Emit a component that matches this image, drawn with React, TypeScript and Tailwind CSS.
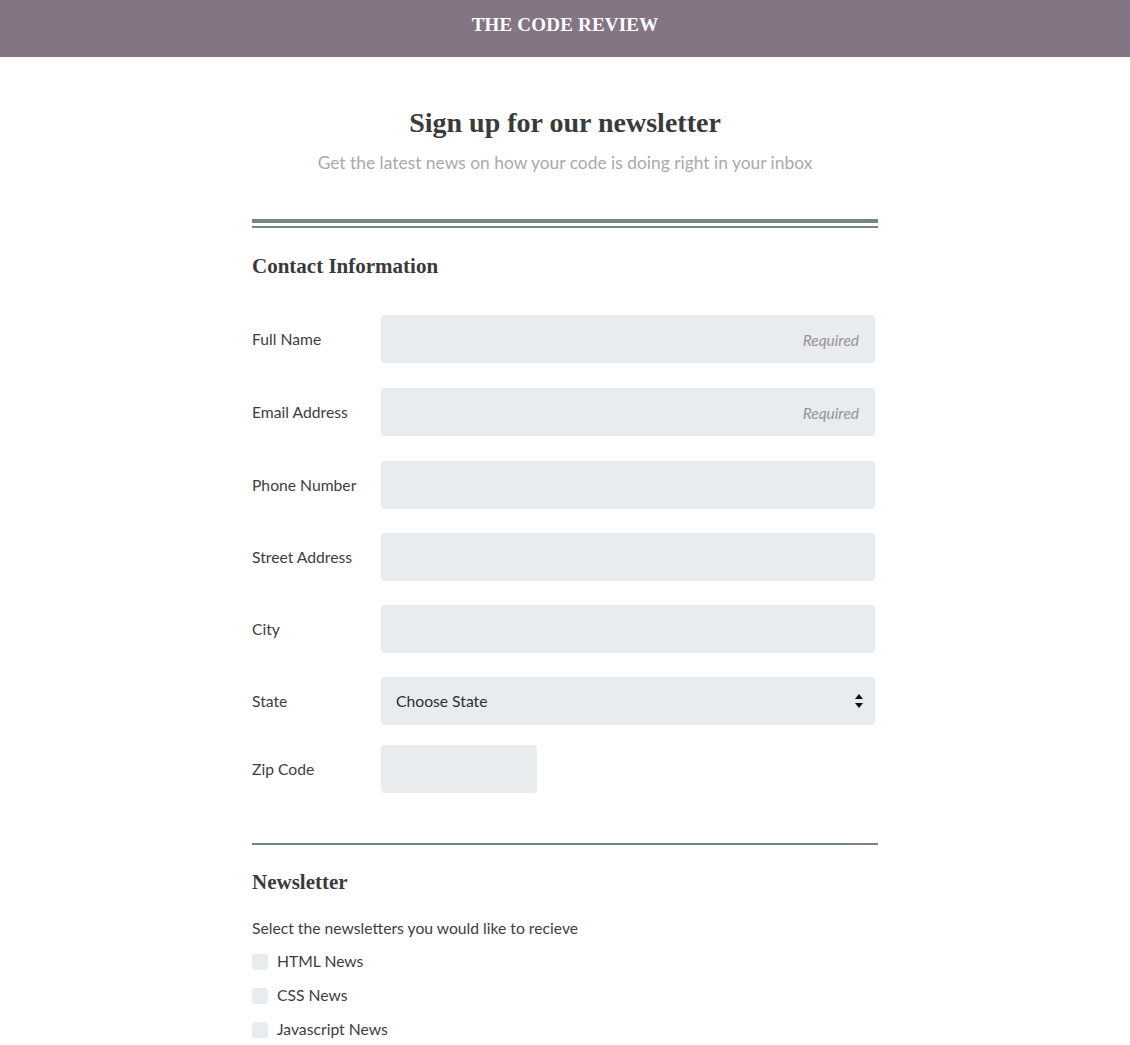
import React from "react";

const serif = { fontFamily: '"Liberation Serif", "Times New Roman", serif' };

function Field({ label, required, children }: { label: string; required?: boolean; children?: React.ReactNode }) {
  return (
    <div className="flex items-center pr-[3px]">
      <label className="w-[129px] shrink-0 pt-[3px] text-[15.7px] text-[#3d3d3d]">{label}</label>
      {children ?? (
        <input
          className="h-12 flex-1 rounded-[4px] bg-[#e8ecee] px-[16px] pt-[2px] text-right text-[15.5px] italic outline-none placeholder:text-[#959595]"
          placeholder={required ? "Required" : ""}
        />
      )}
    </div>
  );
}

function Check({ label }: { label: string }) {
  return (
    <label className="flex h-[34px] items-center">
      <span className="mr-[9px] h-4 w-4 rounded-[3px] bg-[#e8ecee]" />
      <span className="text-[15.7px] text-[#3d3d3d]">{label}</span>
    </label>
  );
}

export default function App() {
  return (
    <div className="min-h-[1045px] bg-white" style={{ fontFamily: 'Lato, "Open Sans", sans-serif' }}>
      <header className="flex h-[57px] items-center justify-center bg-[#847585]">
        <h1 className="pb-[7px] text-[19px] font-bold tracking-[0.2px] text-white" style={serif}>
          THE CODE REVIEW
        </h1>
      </header>
      <main className="mx-auto w-[626px]">
        <div className="pt-[49px] text-center">
          <h2 className="text-[28px] font-bold leading-[34px] text-[#3a3a3a]" style={serif}>
            Sign up for our newsletter
          </h2>
          <p className="mt-[10px] text-[17.4px] text-[#a9a9a9]">Get the latest news on how your code is doing right in your inbox</p>
        </div>
        <div className="mt-[43px] border-t-4 border-[#748684]" />
        <div className="mt-[3px] border-t-2 border-[#748684]" />
        <h3 className="mt-[23px] text-[21px] font-bold text-[#3a3a3a]" style={serif}>
          Contact Information
        </h3>
        <div className="mt-[32px] flex flex-col">
          <Field label="Full Name" required />
          <div className="mt-[25px]">
            <Field label="Email Address" required />
          </div>
          <div className="mt-[25px]">
            <Field label="Phone Number" />
          </div>
          <div className="mt-[24px]">
            <Field label="Street Address" />
          </div>
          <div className="mt-[24px]">
            <Field label="City" />
          </div>
          <div className="mt-[24px]">
            <Field label="State">
              <div className="flex h-12 flex-1 items-center justify-between rounded-[4px] bg-[#e8ecee] pl-[15px] pr-[12px]">
                <span className="pt-[2px] text-[15.7px] text-[#2e2e2e]">Choose State</span>
                <svg width="8" height="14" viewBox="0 0 8 14">
                  <path d="M4 0 L8 5 L0 5 Z" fill="#111" />
                  <path d="M0 9 L8 9 L4 14 Z" fill="#111" />
                </svg>
              </div>
            </Field>
          </div>
          <div className="mt-[20px]">
            <Field label="Zip Code">
              <input className="h-12 w-[156px] rounded-[4px] bg-[#e8ecee] px-[15px] text-[15px] outline-none" />
            </Field>
          </div>
        </div>
        <div className="mt-[50px] border-t-2 border-[#748684]" />
        <h3 className="mt-[22px] text-[21px] font-bold text-[#3a3a3a]" style={serif}>
          Newsletter
        </h3>
        <p className="mt-[19px] text-[15.7px] text-[#3d3d3d]">Select the newsletters you would like to recieve</p>
        <div className="mt-[4px]">
          <Check label="HTML News" />
          <Check label="CSS News" />
          <Check label="Javascript News" />
        </div>
      </main>
    </div>
  );
}
